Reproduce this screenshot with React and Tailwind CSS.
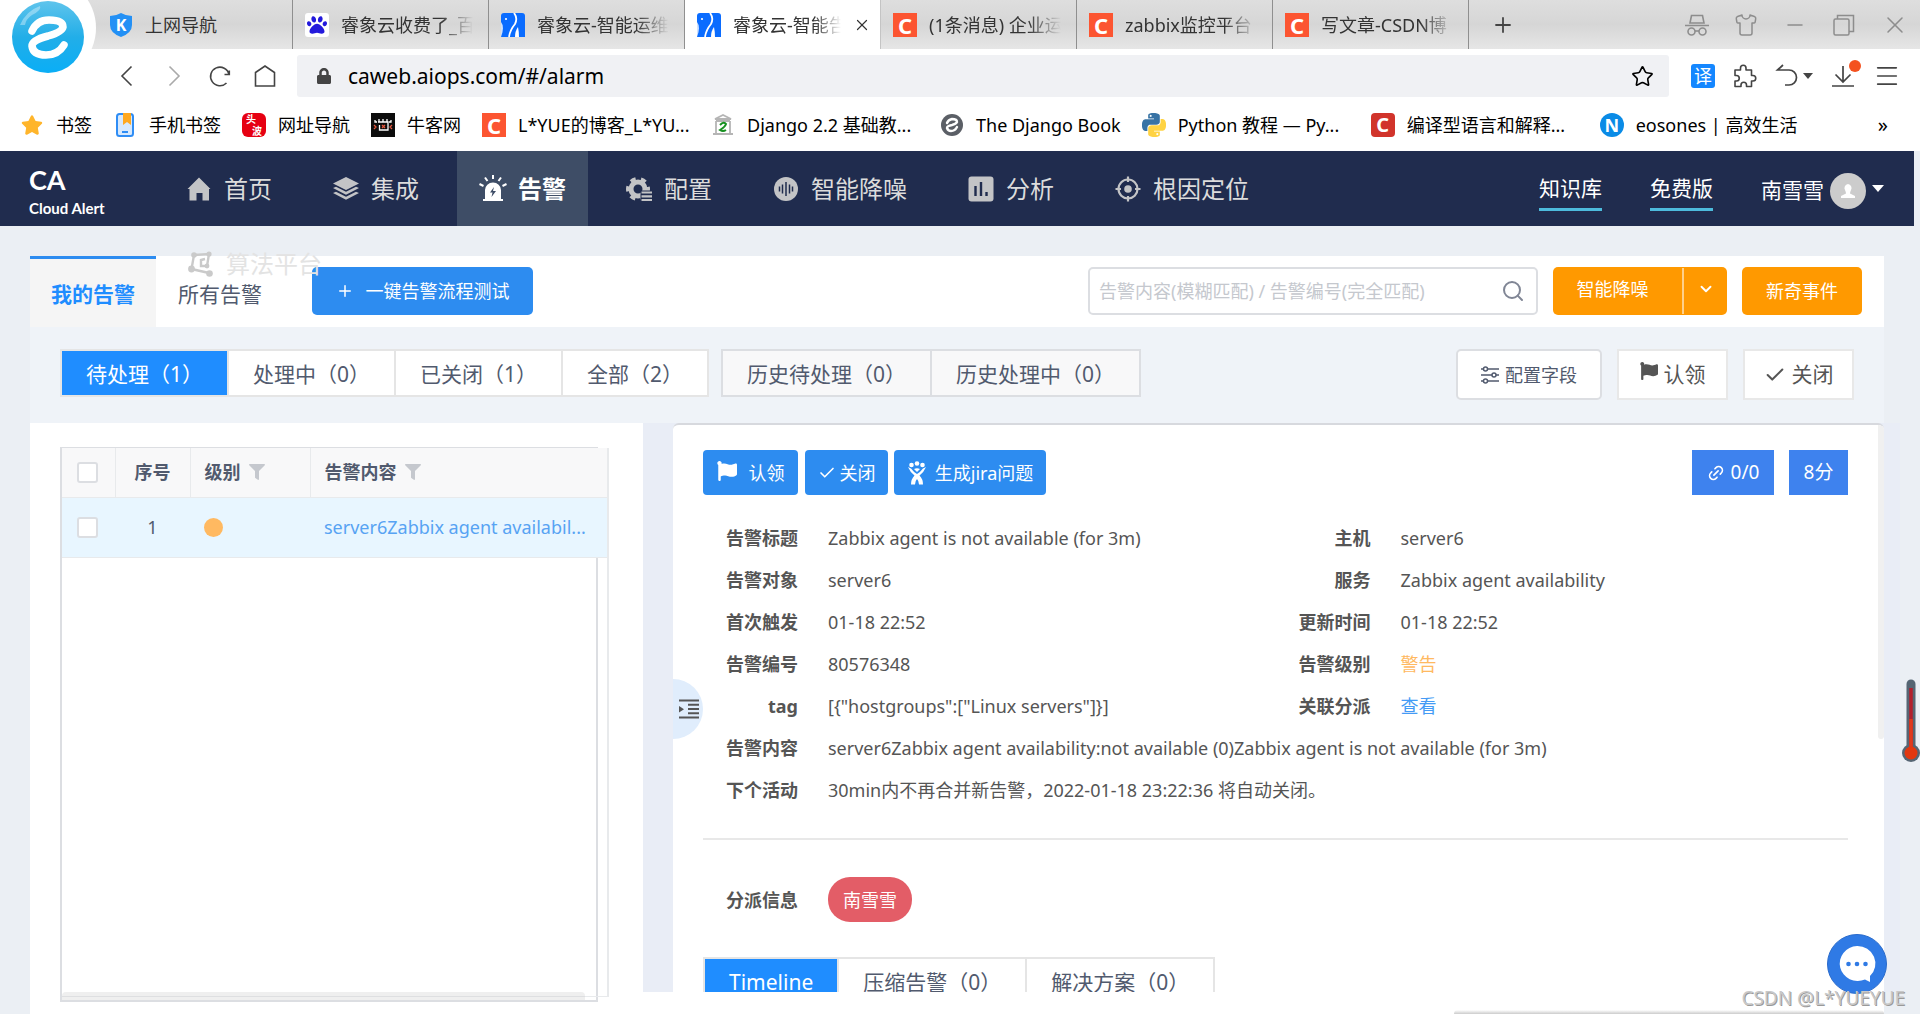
import { Star, X, Minus, Plus, Search, Check, ChevronDown, Link2, Menu, Shirt } from "lucide-react";
import { FaFlag, FaLock, FaStar, FaPaw, FaFilter } from "react-icons/fa";

/* ---------- Small drawings ---------- */

function BrowserLogo() {
  return (
    <svg viewBox="0 0 72 72" className="w-[72px] h-[72px]">
      <defs>
        <linearGradient id="logo-fill" x1="0" y1="0" x2="0" y2="1">
          <stop offset="0" stopColor="#5fc4ec" />
          <stop offset="0.5" stopColor="#22aee8" />
          <stop offset="1" stopColor="#0aaef6" />
        </linearGradient>
      </defs>
      <circle cx="36" cy="36" r="36" fill="url(#logo-fill)" />
      <path d="M8 24Q14 10 28 5Q30 9 20 14Q14 18 13 24Z" fill="#fff" opacity="0.35" />
      <path
        d="M20 30Q25 19 37 19Q51 19 51 26Q50 31 36 35Q20 39 20 45Q21 54 34 54Q46 54 52 44"
        fill="none"
        stroke="#fff"
        strokeWidth="7.5"
        strokeLinecap="round"
        strokeLinejoin="round"
      />
    </svg>
  );
}

function LetterIcon({ letter, className }) {
  return (
    <span className={`flex w-6 h-6 shrink-0 items-center justify-center overflow-hidden text-white font-bold leading-none ${className}`}>
      {letter}
    </span>
  );
}

function ShieldIcon() {
  return (
    <span className="relative flex w-6 h-6 shrink-0 items-center justify-center">
      <svg viewBox="0 0 24 24" className="absolute inset-0">
        <path d="M1 3Q7 3 12 0Q17 3 23 3V12Q23 20 12 24Q1 20 1 12Z" fill="#2390f5" />
      </svg>
      <span className="relative text-base leading-none font-bold text-white">K</span>
    </span>
  );
}

function PawIcon() {
  return (
    <span className="flex w-6 h-6 shrink-0 items-center justify-center rounded-[3px] bg-white text-[#2319dc]">
      <FaPaw size={20} />
    </span>
  );
}

function ElephantIcon() {
  return (
    <svg viewBox="0 0 24 24" className="w-6 h-6 shrink-0">
      <path d="M3 0H21Q24 0 24 3V24H0V3Q0 0 3 0Z" fill="#0a6cff" />
      <path d="M13 0Q17 5 14 11Q9 17 8 24" fill="none" stroke="#fff" strokeWidth="1.8" />
      <path d="M14 24Q14 18 17 14Q18 19 18 24Z" fill="#fff" />
      <path d="M0 9Q4 14 0 24Z" fill="#fff" opacity="0.8" />
      <circle cx="5" cy="6" r="1.1" fill="#fff" />
    </svg>
  );
}

function PhoneBookmarkIcon() {
  return (
    <svg viewBox="0 0 24 24" className="w-6 h-6 shrink-0">
      <rect x="4" y="1" width="16" height="22" rx="2.5" fill="#d7e9fd" stroke="#2f8df5" strokeWidth="2" />
      <path d="M10 0H18V12L14 9L10 12Z" fill="#ffa81f" />
      <path d="M9 19H15" stroke="#2f8df5" strokeWidth="2" />
    </svg>
  );
}

function ToutiaoIcon() {
  return (
    <span className="flex w-6 h-6 shrink-0 flex-col justify-center rounded-md bg-[#e60012] text-[10px] leading-3 font-bold text-white">
      <span className="pl-1">头</span>
      <span className="pl-2.5">波</span>
    </span>
  );
}

function NowcoderIcon() {
  return (
    <svg viewBox="0 0 24 24" className="w-6 h-6 shrink-0">
      <rect width="24" height="24" fill="#0c0c0c" />
      <path d="M4 7V9H6M20 7V9H18M8 6V9M12 6V9M16 6V9M7 9H17V17H8.500V12" fill="none" stroke="#fff" strokeWidth="1.3" />
      <path d="M3 12L5 14L3 16M21 12L19 14L21 16M11 12L14 15M14 12L11 15" fill="none" stroke="#e4573d" strokeWidth="1.3" />
    </svg>
  );
}

function TempleIcon() {
  return (
    <svg viewBox="0 0 24 24" className="w-6 h-6 shrink-0" fill="none">
      <path d="M4 6L12 2L20 6ZM5 8H19M5 8V20M19 8V20M2 21H22" stroke="#b5b5b5" strokeWidth="1.8" />
      <path d="M9 12Q13 8 15 11Q14 14 9 17Q12 19 15 17" stroke="#16901f" strokeWidth="2" />
    </svg>
  );
}

function GrayEIcon() {
  return (
    <svg viewBox="0 0 24 24" className="w-6 h-6 shrink-0">
      <circle cx="12" cy="12" r="11" fill="#5b5f66" />
      <path d="M7 10Q8 7 12 6Q17 6 17 9Q16 11 12 12Q7 13 7 15Q8 18 11 18Q15 18 17 14" fill="none" stroke="#fff" strokeWidth="2.4" strokeLinecap="round" />
    </svg>
  );
}

function PythonIcon() {
  const half =
    "M14.25.18l.9.2.73.26.59.3.45.32.34.34.25.34.16.33.1.3.04.26.02.2-.01.13V8.5l-.05.63-.13.55-.21.46-.26.38-.3.31-.33.25-.35.19-.35.14-.33.1-.3.07-.26.04-.21.02H8.77l-.69.05-.59.14-.5.22-.41.27-.33.32-.27.35-.2.36-.15.37-.1.35-.07.32-.04.27-.02.21v3.06H3.17l-.21-.03-.28-.07-.32-.12-.35-.18-.36-.26-.36-.36-.35-.46-.32-.59-.28-.73-.21-.88-.14-1.05-.05-1.23.06-1.22.16-1.04.24-.87.32-.71.36-.57.4-.44.42-.33.42-.24.4-.16.36-.1.32-.05.24-.01h.16l.06.01h8.16v-.83H6.18l-.01-2.75-.02-.37.05-.34.11-.31.17-.28.25-.26.31-.23.38-.2.44-.18.51-.15.58-.12.64-.1.71-.06.77-.04.84-.02 1.27.05zm-6.3 1.98l-.23.33-.08.41.08.41.23.34.33.22.41.09.41-.09.33-.22.23-.34.08-.41-.08-.41-.23-.33-.33-.22-.41-.09-.41.09z";
  return (
    <svg viewBox="0 0 24 24" className="w-6 h-6 shrink-0">
      <path d={half} fill="#3873a5" />
      <path d={half} fill="#ffd343" transform="rotate(180 12 12)" />
    </svg>
  );
}

function BackIcon({ flip }) {
  return (
    <svg viewBox="0 0 26 26" className="w-[26px] h-[26px]" fill="none" stroke="currentColor" strokeWidth="1.6">
      <path d={flip ? "M8.500 3.500L18 13L8.500 22.500" : "M17.500 3.500L8 13L17.500 22.500"} />
    </svg>
  );
}

function IncognitoIcon() {
  return (
    <svg viewBox="0 0 24 24" className="w-6 h-6" fill="none" stroke="currentColor" strokeWidth="1.6">
      <path d="M5 10L6.500 2.500H17.500L19 10ZM0 12.500H24" />
      <circle cx="6.500" cy="18.500" r="3.500" />
      <circle cx="17.500" cy="18.500" r="3.500" />
      <path d="M10 18H14" />
    </svg>
  );
}

function RestoreIcon() {
  return (
    <svg viewBox="0 0 24 24" className="w-6 h-6" fill="none" stroke="currentColor" strokeWidth="1.500">
      <rect x="2" y="6" width="15" height="16" rx="1.500" />
      <path d="M5.500 6V2.500H21.500V18.500H17" />
    </svg>
  );
}

function ReloadIcon() {
  return (
    <svg viewBox="0 0 24 24" className="w-6 h-6" fill="none" stroke="currentColor" strokeWidth="1.6">
      <path d="M18.500 19A9.300 9.300 0 1 1 21 10.500M16.500 10.500H21.300V6.500" />
    </svg>
  );
}

function PentagonHomeIcon() {
  return (
    <svg viewBox="0 0 24 24" className="w-6 h-6" fill="none" stroke="currentColor" strokeWidth="1.6">
      <path d="M2.500 8.500L12 2L21.500 8.500V22H2.500Z" />
    </svg>
  );
}

function PuzzleIcon() {
  return (
    <svg viewBox="0 0 24 24" className="w-6 h-6" fill="none" stroke="currentColor" strokeWidth="1.6" strokeLinejoin="round">
      <path d="M2 6H7.500V4A2.700 2.700 0 0 1 13 4V6H18.500V11.500H20A2.700 2.700 0 0 1 20 17H18.500V22.500H13.500V21A2.700 2.700 0 0 0 8 21V22.500H2V17H3.500A2.700 2.700 0 0 0 3.500 11.500H2Z" />
    </svg>
  );
}

function UndoIcon() {
  return (
    <svg viewBox="0 0 24 24" className="w-6 h-6" fill="none" stroke="currentColor" strokeWidth="1.700">
      <path d="M8 1L2.500 6H14A7.500 7.500 0 0 1 14 21H10" />
    </svg>
  );
}

function DownloadIcon() {
  return (
    <svg viewBox="0 0 24 24" className="w-6 h-6" fill="none" stroke="currentColor" strokeWidth="1.700">
      <path d="M12 2V18M4.500 10.500L12 18L19.500 10.500M1 22H23" />
    </svg>
  );
}

function HomeFillIcon() {
  return (
    <svg viewBox="0 0 26 26" className="w-[26px] h-[26px]" fill="currentColor">
      <path d="M13 1.500L24.500 13H23V24.500H16.500V17H10.500V24.500H3.500V13H1.500Z" />
    </svg>
  );
}

function LayersIcon() {
  return (
    <svg viewBox="0 0 26 26" className="w-[26px] h-[26px]" fill="currentColor">
      <path d="M13 1L26 7.500L13 14L0 7.500Z" />
      <path d="M0 12L3 10.700L13 15.800L23 10.700L26 12L13 18.800Z" />
      <path d="M0 17L3 15.700L13 20.800L23 15.700L26 17L13 23.800Z" />
    </svg>
  );
}

function SirenIcon() {
  return (
    <svg viewBox="0 0 28 28" className="w-[28px] h-[28px]">
      <path d="M6 24V15A8 7.500 0 0 1 22 15V24H24V26H4V24Z" fill="#fff" />
      <path d="M15 12L11 17.500H13.500L12.500 22L17 16H14Z" fill="#3e4d66" />
      <path d="M14 0V4M6 2.500L8.500 6M22 2.500L19.500 6M0.500 9L4.500 11M27.500 9L23.500 11" stroke="#fff" strokeWidth="2" />
    </svg>
  );
}

function GearListIcon() {
  return (
    <svg viewBox="0 0 26 26" className="w-[26px] h-[26px]">
      <g fill="none" stroke="currentColor">
        <circle cx="12" cy="13" r="7" strokeWidth="5" />
        <circle cx="12" cy="13" r="10.200" strokeWidth="3.600" strokeDasharray="5.300 5.380" strokeDashoffset="2.650" />
      </g>
      <path d="M14.500 14.500H26V26H14.500Z" fill="#202c4e" />
      <path d="M15.500 16.500H26M15.500 20.300H26M15.500 24H26" stroke="currentColor" strokeWidth="2.200" />
    </svg>
  );
}

function WaveIcon() {
  return (
    <svg viewBox="0 0 26 26" className="w-[26px] h-[26px]">
      <circle cx="13" cy="13" r="12" fill="currentColor" />
      <path d="M6.500 10.500V15.500M9.500 8.500V17.500M13 6V20M16.500 8.500V17.500M19.500 10.500V15.500" stroke="#202c4e" strokeWidth="1.500" />
    </svg>
  );
}

function ChartIcon() {
  return (
    <svg viewBox="0 0 26 26" className="w-[26px] h-[26px]">
      <rect x="0.500" y="0.500" width="25" height="25" rx="3" fill="currentColor" />
      <path d="M7.500 10V20M13 6V20M18.500 16V20" stroke="#202c4e" strokeWidth="2.400" />
    </svg>
  );
}

function TargetIcon() {
  return (
    <svg viewBox="0 0 26 26" className="w-[26px] h-[26px]" fill="none" stroke="currentColor" strokeWidth="2.200">
      <circle cx="13" cy="13" r="9.500" />
      <circle cx="13" cy="13" r="3.800" fill="currentColor" stroke="none" />
      <path d="M13 0.500V6M13 20V25.500M0.500 13H6M20 13H25.500" />
    </svg>
  );
}

function AlgorithmIcon() {
  return (
    <svg viewBox="0 0 26 26" className="w-[26px] h-[26px]" fill="none" stroke="currentColor" strokeWidth="2.4">
      <path d="M6 4L21 3L19 15L13 15V9L17 8M6 4L3.500 18L21 22" />
      <g fill="currentColor" stroke="none">
        <circle cx="6" cy="4" r="2.800" />
        <circle cx="21" cy="3" r="2.600" />
        <circle cx="3.500" cy="18" r="3.400" />
        <circle cx="21.500" cy="22.500" r="3.300" />
        <circle cx="19" cy="15" r="2.400" />
      </g>
    </svg>
  );
}

function SlidersIcon() {
  return (
    <svg viewBox="0 0 18 18" className="w-[18px] h-[18px]" fill="none" stroke="currentColor" strokeWidth="1.500">
      <path d="M0 3H2.500M6.500 3H18M0 9H11M15 9H18M0 15H2.500M6.500 15H18" />
      <circle cx="4.500" cy="3" r="2" />
      <circle cx="13" cy="9" r="2" />
      <circle cx="4.500" cy="15" r="2" />
    </svg>
  );
}

function JiraIcon() {
  return (
    <svg viewBox="0 0 20 24" className="w-5 h-6" fill="currentColor">
      <circle cx="4.500" cy="4" r="2.300" />
      <circle cx="10" cy="2.500" r="2.300" />
      <circle cx="15.500" cy="4" r="2.300" />
      <path d="M1 6Q3 11 7.500 14.500Q4 18 4 23.500H8Q8 20 10 18Q12 20 12 23.500H16Q16 18 12.500 14.500Q17 11 19 6L16 7.500Q13.500 11 10 13Q6.500 11 4 7.500Z" />
      <path d="M7 8Q10 6.500 13 8L10 11Z" />
    </svg>
  );
}

function OutdentIcon() {
  return (
    <svg viewBox="0 0 20 20" className="w-5 h-5" fill="none" stroke="currentColor" strokeWidth="2">
      <path d="M0 1.500H20M9 5.800H20M9 10H20M9 14.200H20M0 18.500H20" />
      <path d="M0 7V13.500L5 10.200Z" fill="currentColor" stroke="none" />
    </svg>
  );
}

function Thermometer() {
  return (
    <svg viewBox="0 0 18 84" className="w-[18px] h-[84px]">
      <rect x="4.500" y="0.500" width="9" height="76" rx="4.500" fill="#566673" />
      <circle cx="9" cy="74" r="9" fill="#566673" />
      <path d="M9 9V74" stroke="#b3202c" strokeWidth="3.500" />
      <path d="M9 40V74" stroke="#e03a1c" strokeWidth="3.500" />
      <circle cx="9" cy="74" r="6.500" fill="#e2380f" />
    </svg>
  );
}

function ChatIcon() {
  return (
    <svg viewBox="0 0 60 60" className="w-[60px] h-[60px]">
      <circle cx="30" cy="30" r="29.500" fill="#2f7ae5" stroke="#2a6bcb" />
      <path d="M30 12A18 17.500 0 1 0 38 45.500L43 48V42A18 17.500 0 0 0 30 12Z" fill="#fff" />
      <g fill="#2f7ae5">
        <circle cx="21.500" cy="30" r="2.300" />
        <circle cx="30" cy="30" r="2.300" />
        <circle cx="38.500" cy="30" r="2.300" />
      </g>
    </svg>
  );
}

/* ---------- Data ---------- */

const csdn = <LetterIcon letter="C" className="bg-[#fc5531] text-[22px]" />;

const tabs = [
  { title: "上网导航", icon: <ShieldIcon /> },
  { title: "睿象云收费了_百", icon: <PawIcon /> },
  { title: "睿象云-智能运维", icon: <ElephantIcon /> },
  { title: "睿象云-智能告", icon: <ElephantIcon />, active: true },
  { title: "(1条消息) 企业运", icon: csdn },
  { title: "zabbix监控平台", icon: csdn },
  { title: "写文章-CSDN博", icon: csdn },
];

const bookmarks = [
  { title: "书签", icon: <span className="flex w-6 shrink-0 justify-center text-[#ffb52b]"><FaStar size={22} /></span> },
  { title: "手机书签", icon: <PhoneBookmarkIcon /> },
  { title: "网址导航", icon: <ToutiaoIcon /> },
  { title: "牛客网", icon: <NowcoderIcon /> },
  { title: "L*YUE的博客_L*YU...", icon: csdn, wide: true },
  { title: "Django 2.2 基础教...", icon: <TempleIcon />, wide: true },
  { title: "The Django Book", icon: <GrayEIcon /> },
  { title: "Python 教程 — Py...", icon: <PythonIcon />, wide: true },
  { title: "编译型语言和解释...", icon: <LetterIcon letter="C" className="rounded bg-[#d1342b] text-[20px]" />, wide: true },
  { title: "eosones | 高效生活", icon: <LetterIcon letter="N" className="rounded-full bg-[#0a8be6] text-lg" /> },
];

const navItems = [
  { label: "首页", icon: <HomeFillIcon /> },
  { label: "集成", icon: <LayersIcon /> },
  { label: "告警", icon: <SirenIcon />, active: true },
  { label: "配置", icon: <GearListIcon /> },
  { label: "智能降噪", icon: <WaveIcon /> },
  { label: "分析", icon: <ChartIcon /> },
  { label: "根因定位", icon: <TargetIcon /> },
];

const fields = [
  ["告警标题", "Zabbix agent is not available (for 3m)", "主机", "server6"],
  ["告警对象", "server6", "服务", "Zabbix agent availability"],
  ["首次触发", "01-18 22:52", "更新时间", "01-18 22:52"],
  ["告警编号", "80576348", "告警级别", <span className="text-[#ffb961]">警告</span>],
  ["tag", '[{"hostgroups":["Linux servers"]}]', "关联分派", <a href="#view" className="text-[#459bf5]">查看</a>],
  ["告警内容", "server6Zabbix agent availability:not available (0)Zabbix agent is not available (for 3m)"],
  ["下个活动", "30min内不再合并新告警，2022-01-18 23:22:36 将自动关闭。"],
];

/* ---------- Browser chrome ---------- */

function TabStrip() {
  return (
    <div className="flex h-[49px] bg-linear-to-b from-[#dedede] via-[#d6d6d6] to-[#e6e6e6] pl-[97px]">
      {tabs.map((tab, i) => (
        <div
          key={i}
          className={`flex w-[196px] shrink-0 items-center gap-3 pl-3 border-r ${
            tab.active ? "bg-white border-[#c4c4c4]" : "border-[#8f8f8f]"
          }`}
        >
          {tab.icon}
          <span
            className={`overflow-hidden whitespace-nowrap text-lg text-[#333] ${i > 0 ? "mask-r-from-75%" : ""} ${
              tab.active ? "w-[108px]" : "w-[132px]"
            }`}
          >
            {tab.title}
          </span>
          {tab.active && (
            <button aria-label="Close tab" className="text-[#333]">
              <X size={18} strokeWidth={1.6} />
            </button>
          )}
        </div>
      ))}
      <button aria-label="New tab" className="ml-[22px] text-[#444]">
        <Plus size={24} strokeWidth={1.8} />
      </button>
      <div className="ml-auto flex items-center gap-[25px] pr-[11px] text-[#8d8d8d]">
        <button aria-label="Private mode"><IncognitoIcon /></button>
        <button aria-label="Skin"><Shirt size={24} strokeWidth={1.5} /></button>
        <button aria-label="Minimize"><Minus size={24} strokeWidth={1.5} /></button>
        <button aria-label="Restore"><RestoreIcon /></button>
        <button aria-label="Close"><X size={28} strokeWidth={1.3} /></button>
      </div>
    </div>
  );
}

function AddressBar() {
  return (
    <div className="flex h-[54px] items-center pl-[114px] text-[#444]">
      <div className="flex items-center gap-[21px]">
        <button aria-label="Back"><BackIcon /></button>
        <button aria-label="Forward" className="text-[#aaa]"><BackIcon flip /></button>
        <button aria-label="Reload"><ReloadIcon /></button>
        <button aria-label="Home"><PentagonHomeIcon /></button>
      </div>
      <div className="ml-5 flex h-[42px] flex-1 items-center rounded-[3px] bg-[#f0f1f4] px-[15px]">
        <span className="flex w-6 justify-center"><FaLock size={16} /></span>
        <input
          aria-label="Address"
          defaultValue="caweb.aiops.com/#/alarm"
          className="ml-2 flex-1 bg-transparent px-1 pt-0.5 text-[21px] text-black outline-none"
        />
        <button aria-label="Add bookmark" className="text-black"><Star size={23} strokeWidth={1.7} /></button>
      </div>
      <div className="ml-[22px] flex items-center gap-[18px] pr-[19px]">
        <button className="h-6 w-6 rounded-[3px] bg-[#1487ff] text-lg leading-6 text-white">译</button>
        <button aria-label="Extensions"><PuzzleIcon /></button>
        <button aria-label="Undo close" className="flex items-center gap-1">
          <UndoIcon />
          <span className="border-x-[5px] border-t-[6px] border-x-transparent border-t-[#444]" />
        </button>
        <button aria-label="Downloads" className="relative">
          <DownloadIcon />
          <span className="absolute -top-1 -right-1.5 h-3 w-3 rounded-full bg-[#f4511e]" />
        </button>
        <button aria-label="Menu"><Menu size={28} strokeWidth={1.4} /></button>
      </div>
    </div>
  );
}

function BookmarkBar() {
  return (
    <div className="flex h-12 items-center gap-[21px] pb-1 pl-5 pr-8 text-lg text-black">
      {bookmarks.map((b) => (
        <a key={b.title} href="#bookmark" className="flex shrink-0 items-center gap-3">
          {b.icon}
          <span className={`whitespace-nowrap ${b.wide ? "w-[172px]" : ""}`}>{b.title}</span>
        </a>
      ))}
      <button aria-label="More bookmarks" className="ml-auto text-xl leading-none">»</button>
    </div>
  );
}

/* ---------- App ---------- */

function TopNav() {
  return (
    <header className="mr-1.5 flex h-[75px] shrink-0 bg-[#202c4e] text-[#dcdcdc]">
      <div className="flex w-[163px] flex-col justify-center pt-1.5 pl-[29px] font-['Lato'] text-white">
        <span className="text-[27px] leading-8 font-bold">CA</span>
        <span className="text-[15px] leading-6 font-bold whitespace-nowrap">Cloud Alert</span>
      </div>
      <nav className="relative flex gap-[15px] text-2xl">
        {navItems.map((item) => (
          <a
            key={item.label}
            href="#nav"
            className={`flex items-center whitespace-nowrap ${
              item.active ? "gap-[11px] px-[22px] bg-[#3e4d66] font-bold text-white" : "gap-3 px-[23px]"
            }`}
          >
            <span className={item.active ? "" : "text-[#c3c4c6]"}>{item.icon}</span>
            {item.label}
          </a>
        ))}
        {/* wrapped nav item that spills below the header */}
        <a href="#nav" className="absolute top-full left-0.5 z-10 mt-[22px] flex items-center gap-3 px-[23px] whitespace-nowrap text-[#e3e3e3]">
          <span className="text-[#cacaca]"><AlgorithmIcon /></span>
          算法平台
        </a>
      </nav>
      <div className="ml-auto flex items-center pr-[30px] text-[21px] text-white">
        <a href="#docs" className="mt-1.5 mr-12 border-b-[3px] border-[#4dbbdc] pb-1 leading-8">知识库</a>
        <a href="#plan" className="mt-1.5 mr-12 border-b-[3px] border-[#4dbbdc] pb-1 leading-8">免费版</a>
        <button className="mt-1 flex items-center gap-1.5">
          南雪雪
          <span className="flex h-9 w-9 items-center justify-center rounded-full bg-[#ccc]">
            <svg viewBox="0 0 16 16" className="h-4 w-4" fill="#fff">
              <path d="M8 1A4 4 0 0 0 5 7Q6 9 6 10.500L1 13V15H15V13L10 10.500Q10 9 11 7A4 4 0 0 0 8 1Z" />
            </svg>
          </span>
          <span className="mb-1 border-x-[6px] border-t-[7px] border-x-transparent border-t-white" />
        </button>
      </div>
    </header>
  );
}

function Toolbar() {
  return (
    <div className="flex h-[71px] shrink-0 bg-white">
      <button className="w-[126px] border-t-[3px] border-[#2d8cf0] bg-[#f5f5f5] pt-1 text-[21px] font-bold text-[#1f8dff]">
        我的告警
      </button>
      <button className="w-32 pt-1.5 text-[21px] text-[#515a6e]">所有告警</button>
      <div className="flex flex-1 items-center pr-[22px] pb-0.5 pl-7 text-lg">
        <button className="flex h-12 w-[221px] items-center justify-center gap-3 rounded-[5px] bg-[#2d8cf0] text-white">
          <Plus size={18} strokeWidth={2} />
          一键告警流程测试
        </button>
        <div className="ml-auto flex h-12 w-[450px] items-center rounded-[5px] border-2 border-[#dcdee2] bg-white pr-[11px]">
          <input
            aria-label="搜索告警"
            placeholder="告警内容(模糊匹配) / 告警编号(完全匹配)"
            className="h-full flex-1 bg-transparent pl-[9px] outline-none placeholder:text-[#c5c8ce]"
          />
          <Search size={24} strokeWidth={2} className="text-[#808695]" />
        </div>
        <div className="ml-[15px] flex h-12 rounded-[5px] bg-[#ff9900] text-white">
          <button className="w-[129px] pr-8 pb-1 pl-[22px] whitespace-nowrap">智能降噪</button>
          <button aria-label="更多" className="my-px flex w-[45px] items-center justify-center border-l-2 border-[#ffd08a] pb-1">
            <ChevronDown size={18} strokeWidth={2.5} />
          </button>
        </div>
        <button className="ml-[15px] h-12 w-[120px] rounded-[5px] bg-[#ff9900] text-white">新奇事件</button>
      </div>
    </div>
  );
}

function StatusFilters() {
  const current = ["待处理（1）", "处理中（0）", "已关闭（1）", "全部（2）"];
  const history = ["历史待处理（0）", "历史处理中（0）"];

  return (
    <div className="flex h-24 shrink-0 items-start bg-[#eff3f8] px-[30px] pt-[22px] text-[21px] text-[#515a6e]">
      <div className="flex h-12 divide-x-2 divide-[#e5e5e5] border-2 border-[#e5e5e5] bg-white">
        {current.map((label, i) => (
          <button key={label} className={`px-6 pt-[3px] whitespace-nowrap ${i === 0 ? "bg-[#1f8dff] text-white" : ""}`}>
            {label}
          </button>
        ))}
      </div>
      <div className="ml-3 flex h-12 divide-x-2 divide-[#dcdee2] border-2 border-[#dcdee2] bg-[#f8f8f9]">
        {history.map((label) => (
          <button key={label} className="px-6 pt-[3px] whitespace-nowrap">{label}</button>
        ))}
      </div>
      <div className="ml-auto flex gap-[15px]">
        <button className="flex h-[51px] w-[146px] items-center justify-center gap-1.5 rounded-[5px] border-2 border-[#dcdee2] bg-white text-lg">
          <SlidersIcon />
          配置字段
        </button>
        <button className="flex h-[51px] w-[111px] items-center justify-center gap-1.5 border-2 border-[#e8e8e8] bg-white text-[#555]">
          <FaFlag size={18} className="mb-2" />
          认领
        </button>
        <button className="flex h-[51px] w-[111px] items-center justify-center gap-1.5 border-2 border-[#e8e8e8] bg-white text-[#555]">
          <Check size={22} strokeWidth={2.2} />
          关闭
        </button>
      </div>
    </div>
  );
}

function AlarmTable() {
  const checkbox = "block h-[21px] w-[21px] appearance-none rounded-[3px] border-2 border-[#dcdee2] bg-white";
  return (
    <section className="flex w-[613px] shrink-0 flex-col bg-white px-[30px] pt-6 pb-3">
      <div className="relative w-[538px] flex-1 border-2 border-t border-[#dcdee2]">
        {/* the table is a little wider than its frame */}
        <div className="absolute top-0 left-0 bottom-[3px] w-[547px] border-r-2 border-b border-[#e8eaec]">
          <table className="w-full table-fixed text-lg text-[#515a6e]">
            <thead className="bg-[#f8f8f9]">
              <tr className="h-[49px] border-b border-[#e8eaec] text-left">
                <th className="w-[53px] border-r border-[#e8eaec] pl-[15px]">
                  <input type="checkbox" aria-label="全选" className={checkbox} />
                </th>
                <th className="w-[75px] border-r border-[#e8eaec] text-center">序号</th>
                <th className="w-[120px] border-r border-[#e8eaec] pl-3.5">
                  <span className="flex items-center gap-2">级别 <FaFilter size={16} className="text-[#c5c8ce]" /></span>
                </th>
                <th className="pl-3.5">
                  <span className="flex items-center gap-2">告警内容 <FaFilter size={16} className="text-[#c5c8ce]" /></span>
                </th>
              </tr>
            </thead>
            <tbody>
              <tr className="h-[60px] border-b border-[#e8eaec] bg-[#e8f6ff]">
                <td className="pl-[15px]">
                  <input type="checkbox" aria-label="选择 1" className={checkbox} />
                </td>
                <td className="text-center">1</td>
                <td className="pl-3.5">
                  <span className="block h-[19px] w-[19px] rounded-full bg-[#ffb961]" />
                </td>
                <td className="pl-3.5 whitespace-nowrap">
                  <a href="#alarm" className="text-[#57a3f3]">server6Zabbix agent availabil...</a>
                </td>
              </tr>
            </tbody>
          </table>
        </div>
        {/* horizontal scroll thumb */}
        <div className="absolute bottom-0 left-0 h-2 w-[523px] rounded-t bg-[#c1c1c1]/25" />
      </div>
    </section>
  );
}

function AlarmDetail() {
  const action = "flex h-[45px] items-center justify-center rounded bg-[#2d8cf0] text-white";
  const badge = "flex h-[45px] items-center justify-center gap-1.5 bg-[#3e82ee] text-[19px] text-white";
  return (
    <section className="relative min-w-0 flex-1 overflow-hidden rounded-t-md border-t-2 border-[#d7d9de] bg-white px-[30px] pt-[25px] text-lg text-[#555]">
      <div className="flex items-center">
        <button className={`${action} w-[95px] gap-3`}>
          <FaFlag size={20} className="mb-1" />
          认领
        </button>
        <button className={`${action} ml-[7px] w-[83px] gap-1`}>
          <Check size={18} strokeWidth={2.2} />
          关闭
        </button>
        <button className={`${action} ml-1.5 w-[152px] gap-2`}>
          <JiraIcon />
          生成jira问题
        </button>
        <button className={`${badge} ml-auto mr-[15px] w-[82px]`}>
          <Link2 size={18} strokeWidth={2.2} className="-rotate-45" />
          0/0
        </button>
        <button className={`${badge} mr-1.5 w-[59px]`}>8分</button>
      </div>

      <dl className="mt-[22px] mr-1.5">
        {fields.map(([label, value, label2, value2]) => (
          <div key={label} className="flex h-[42px] items-center">
            <dt className="w-[95px] shrink-0 text-right font-bold">{label}</dt>
            <dd className={`pl-[30px] whitespace-nowrap ${label2 ? "w-[calc(50%-95px)]" : ""}`}>{value}</dd>
            {label2 && (
              <>
                <dt className="w-[95px] text-right font-bold whitespace-nowrap">{label2}</dt>
                <dd className="flex-1 pl-[30px] whitespace-nowrap">{value2}</dd>
              </>
            )}
          </div>
        ))}
      </dl>

      <div className="mt-[27px] mr-1.5 border-t-2 border-[#e8e8e8]" />

      <div className="mt-[37px] flex items-center">
        <span className="w-[95px] text-right font-bold">分派信息</span>
        <span className="ml-[30px] flex h-[45px] w-[84px] items-center justify-center rounded-[22px] bg-[#e35d67] text-white">
          南雪雪
        </span>
      </div>

      <div className="mt-[35px] inline-flex h-[50px] divide-x-2 divide-[#e5e5e5] border-2 border-[#e5e5e5] text-[21px] text-[#515a6e]">
        <button className="bg-[#1f8dff] px-6 text-white">Timeline</button>
        <button className="px-6 whitespace-nowrap">压缩告警（0）</button>
        <button className="px-6 whitespace-nowrap">解决方案（0）</button>
      </div>

      {/* collapse handle */}
      <button aria-label="收起" className="absolute top-[254px] left-0 flex h-[60px] w-[30px] items-center rounded-r-full bg-[#e0edfc] pl-1.5">
        <OutdentIcon />
      </button>
      {/* scroll thumb */}
      <div className="absolute top-0 right-0 h-[314px] w-1.5 rounded-b bg-[#f0f0f0]" />
    </section>
  );
}

export default function App() {
  return (
    <div className="relative flex h-screen flex-col overflow-hidden bg-[#ebeff4] font-['Noto_Sans','Noto_Sans_CJK_SC',sans-serif]">
      <div className="relative shrink-0 bg-white">
        <TabStrip />
        <AddressBar />
        <BookmarkBar />
        <div className="absolute -top-6 left-0 flex h-[104px] w-24 items-end justify-center rounded-r-full bg-white pb-[7px]">
          <BrowserLogo />
        </div>
      </div>

      <TopNav />

      <main className="mt-[30px] mr-9 ml-[30px] flex min-h-0 flex-1 flex-col">
        <Toolbar />
        <StatusFilters />
        <div className="flex min-h-0 flex-1 bg-white">
          <AlarmTable />
          <div className="mb-[22px] -mr-4 flex min-w-0 flex-1 bg-[#e9edf6] pr-4 pl-[30px]">
            <AlarmDetail />
          </div>
        </div>
      </main>

      {/* floating things over the page */}
      <div className="absolute top-[679px] right-0"><Thermometer /></div>
      <div className="absolute right-9 bottom-0 h-1 w-[430px] rounded-t bg-linear-to-b from-white to-[#ccc]" />
      <button aria-label="在线客服" className="absolute right-[33px] bottom-5"><ChatIcon /></button>
      <span className="absolute right-[15px] bottom-1 text-[19px] leading-6 text-[#c8c8c8] [text-shadow:1px_1px_0_#999]">
        CSDN @L*YUEYUE
      </span>
    </div>
  );
}
